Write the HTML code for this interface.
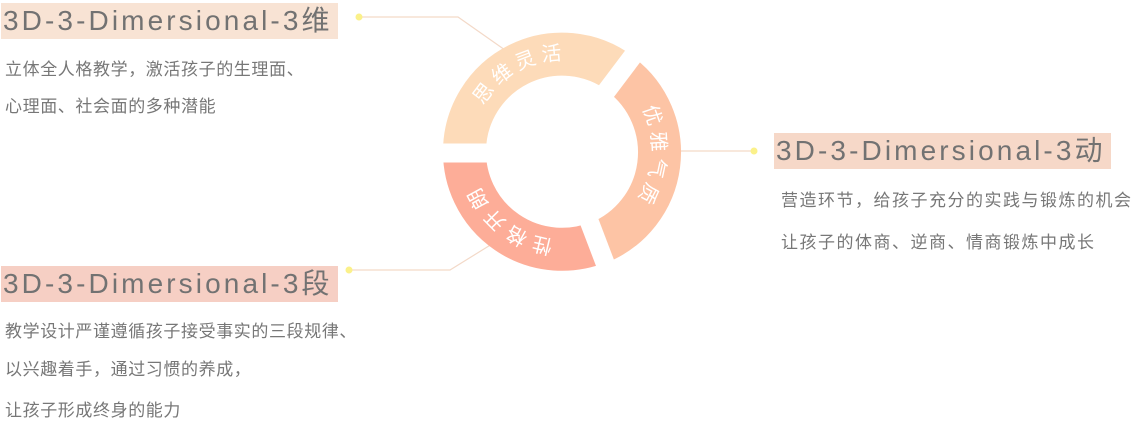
<!DOCTYPE html>
<html><head><meta charset="utf-8"><style>
body{margin:0;width:1140px;height:427px;background:#fff;position:relative;overflow:hidden;font-family:"Liberation Sans","Noto Sans CJK SC",sans-serif;color:#777}
.h{position:absolute;height:36px;line-height:36px;font-size:28px;padding:0 2px;letter-spacing:3.1px;white-space:nowrap;color:#727272}
.t{position:absolute;font-size:17px;letter-spacing:0.6px;color:#777;white-space:nowrap}
.r{letter-spacing:1.5px}
</style></head><body>
<div class="h" style="left:1px;top:3px;width:333px;background:#f8e3d4">3D-3-Dimersional-3维</div>
<div class="h" style="left:774px;top:133px;width:333px;background:#f6d8c8">3D-3-Dimersional-3动</div>
<div class="h" style="left:1px;top:266px;width:333px;background:#f6cfc4">3D-3-Dimersional-3段</div>
<div class="t" style="left:5px;top:55px">立体全人格教学，激活孩子的生理面、</div>
<div class="t" style="left:5px;top:92px">心理面、社会面的多种潜能</div>
<div class="t r" style="left:781px;top:186px">营造环节，给孩子充分的实践与锻炼的机会</div>
<div class="t r" style="left:781px;top:228px">让孩子的体商、逆商、情商锻炼中成长</div>
<div class="t" style="left:5px;top:317px">教学设计严谨遵循孩子接受事实的三段规律、</div>
<div class="t" style="left:5px;top:355px">以兴趣着手，通过习惯的养成，</div>
<div class="t" style="left:5px;top:396px">让孩子形成终身的能力</div>
<svg width="1140" height="427" style="position:absolute;left:0;top:0">
<g fill="none" stroke="#f3d9c8" stroke-width="1.2">
<polyline points="359,17 458,17 505,50"/>
<polyline points="670,151 754,151"/>
<polyline points="349,270 450,270 492,244"/>
</g>
<circle cx="359" cy="17" r="3.5" fill="#fbf18a"/>
<circle cx="754" cy="151" r="3.5" fill="#fbf18a"/>
<circle cx="349" cy="270" r="3.5" fill="#fbf18a"/>
<g fill="none" stroke-width="43">
<path d="M464.5,152 A97.5,97.5 0 0 1 621,74" stroke="#fddbb9"/>
<path d="M620,74 A97.5,97.5 0 0 1 598,243" stroke="#fdc4a5"/>
<path d="M599,242 A97.5,97.5 0 0 1 464.5,150" stroke="#fdad98"/>
</g>
<g stroke="#fff" stroke-width="19">
<line x1="562" y1="153" x2="430" y2="153"/>
<line x1="562" y1="150" x2="642" y2="44"/>
<line x1="562" y1="150" x2="610" y2="276"/>
</g>
<defs><path id="c" d="M472,150 A90,90 0 1 1 652,150 A90,90 0 1 1 472,150"/></defs>
<g fill="#fff" font-size="20" letter-spacing="5" font-family="Liberation Sans,Noto Sans CJK SC,sans-serif">
<text><textPath href="#c" startOffset="96" text-anchor="middle">思维灵活</textPath></text>
<text><textPath href="#c" startOffset="289" text-anchor="middle">优雅气质</textPath></text>
<text><textPath href="#c" startOffset="482" text-anchor="middle">性格开朗</textPath></text>
</g>
</svg>
</body></html>
